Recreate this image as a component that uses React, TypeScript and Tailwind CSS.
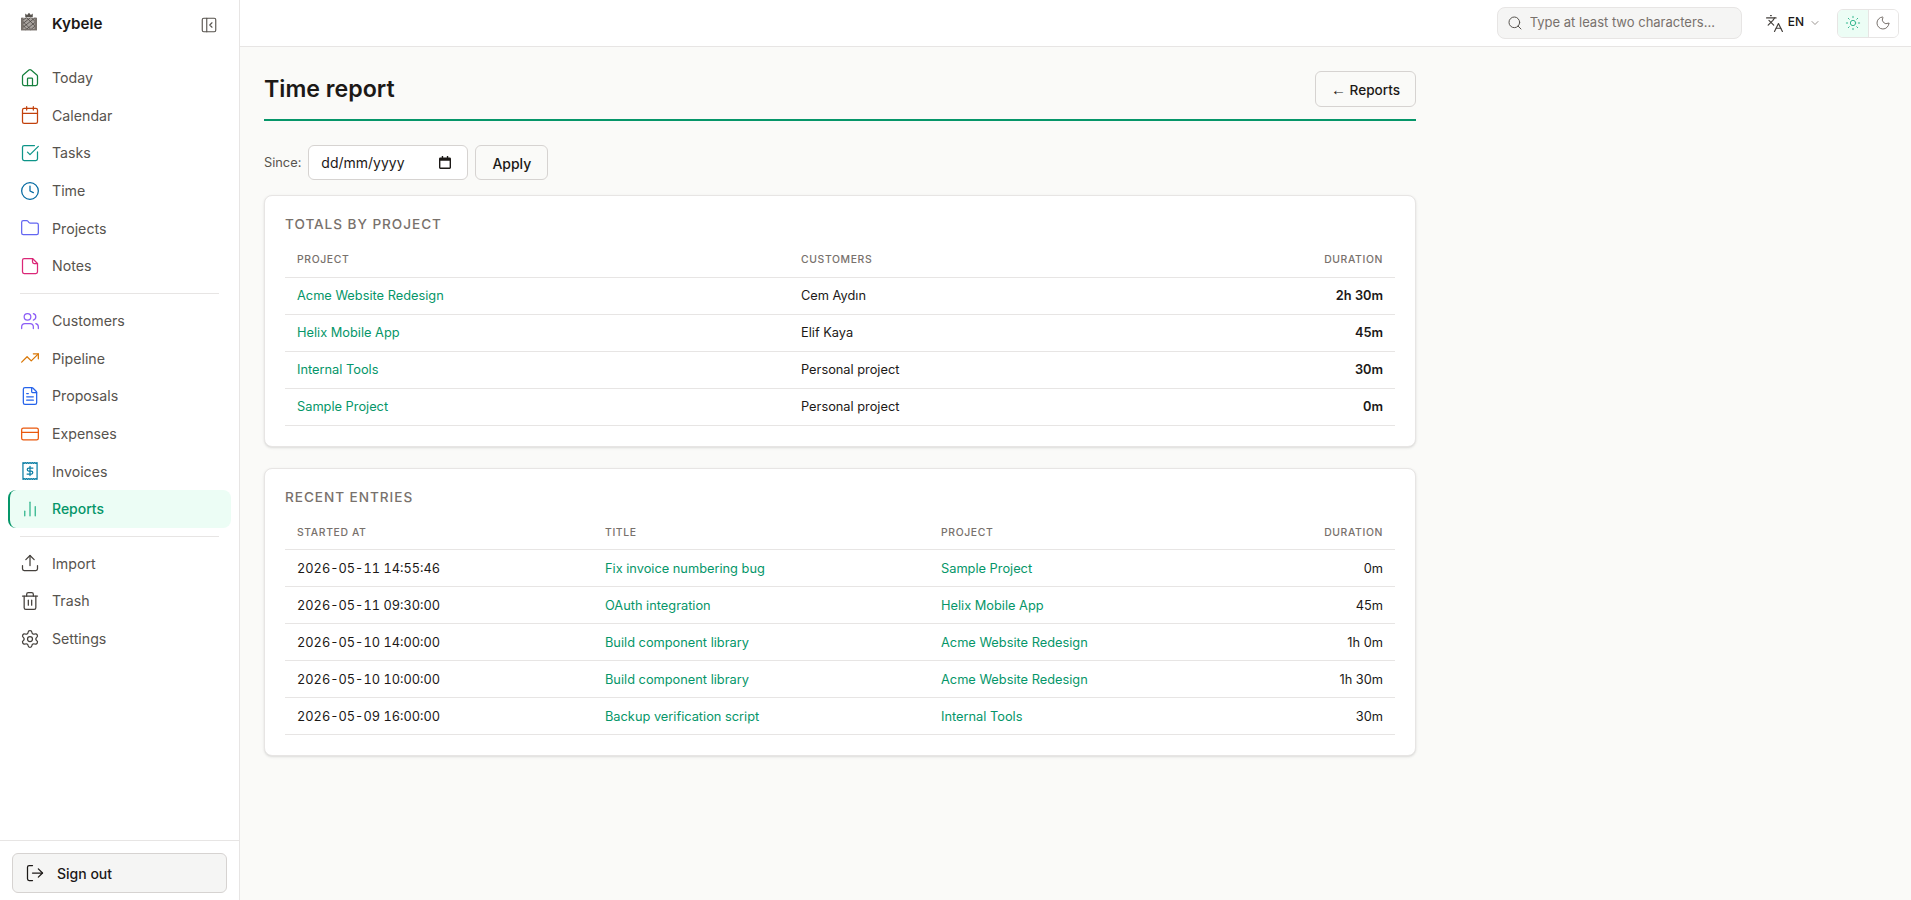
import React from "react";
import {
  House, Calendar, SquareCheckBig, Clock, Folder, Users, TrendingUp, FileText, CreditCard,
  ChartNoAxesColumn, Upload, Trash2, Settings, LogOut, Languages, Sun, Moon, Search, ChevronDown, PanelLeftClose,
} from "lucide-react";

const NoteIcon = ({ size = 20, className = "" }: { size?: number; className?: string }) => (
  <svg width={size} height={size} viewBox="0 0 24 24" fill="none" stroke="currentColor" strokeWidth={1.5} strokeLinecap="round" strokeLinejoin="round" className={className}>
    <path d="M5 3h10l6 6v10a2 2 0 0 1-2 2H5a2 2 0 0 1-2-2V5a2 2 0 0 1 2-2z" />
    <path d="M15 3v4a2 2 0 0 0 2 2h4" />
  </svg>
);

const InvoiceIcon = ({ size = 20, className = "" }: { size?: number; className?: string }) => (
  <svg width={size} height={size} viewBox="0 0 24 24" fill="none" stroke="currentColor" strokeWidth={1.5} strokeLinecap="round" strokeLinejoin="round" className={className}>
    <path d="M3.5 2l1.4.8 1.4-.8 1.4.8 1.4-.8 1.4.8L12 2l1.4.8 1.4-.8 1.4.8 1.4-.8 1.4.8 1.5-.8v20l-1.5-.8-1.4.8-1.4-.8-1.4.8-1.4-.8-1.4.8-1.4-.8-1.4.8-1.4-.8-1.4.8-1.4-.8-1.4.8z" />
    <path d="M15.5 8.5h-5a1.8 1.8 0 0 0 0 3.6h3a1.8 1.8 0 0 1 0 3.6h-5" />
    <path d="M12 6.5v11" />
  </svg>
);

const Logo = () => (
  <svg width="16" height="19" viewBox="0 0 17 20" fill="none" className="shrink-0 mb-[6px]">
    <path d="M4.5 5.5V1.5l2 1.5 2-2.2 2 2.2 2-1.5v4z" fill="#57534e" />
    <rect x="1" y="6" width="15" height="13" fill="#a8a29e" />
    <path d="M1 9l5-3M1 13l9-7M1 17l14-11M5 19l11-9M10 19l6-5M1 9l10 10M1 13l6 6M6 6l10 10M11 6l5 5" stroke="#44403c" strokeWidth="0.8" />
    <rect x="0" y="6" width="2.5" height="13" fill="#78716c" />
    <rect x="14.5" y="6" width="2.5" height="13" fill="#78716c" />
    <rect x="0" y="18" width="17" height="1.5" fill="#78716c" />
  </svg>
);

type NavItem = { label: string; icon: React.ComponentType<any>; color: string; active?: boolean };

const group1: NavItem[] = [
  { label: "Today", icon: House, color: "text-[#15803d]" },
  { label: "Calendar", icon: Calendar, color: "text-[#c2410c]" },
  { label: "Tasks", icon: SquareCheckBig, color: "text-[#0d9488]" },
  { label: "Time", icon: Clock, color: "text-[#0369a1]" },
  { label: "Projects", icon: Folder, color: "text-[#6366f1]" },
  { label: "Notes", icon: NoteIcon, color: "text-[#db2777]" },
];
const group2: NavItem[] = [
  { label: "Customers", icon: Users, color: "text-[#8b5cf6]" },
  { label: "Pipeline", icon: TrendingUp, color: "text-[#d97706]" },
  { label: "Proposals", icon: FileText, color: "text-[#2563eb]" },
  { label: "Expenses", icon: CreditCard, color: "text-[#ea580c]" },
  { label: "Invoices", icon: InvoiceIcon, color: "text-[#0e7fa5]" },
  { label: "Reports", icon: ChartNoAxesColumn, color: "text-[#34b78f]", active: true },
];
const group3: NavItem[] = [
  { label: "Import", icon: Upload, color: "text-[#44403c]" },
  { label: "Trash", icon: Trash2, color: "text-[#44403c]" },
  { label: "Settings", icon: Settings, color: "text-[#44403c]" },
];

function NavRow({ item }: { item: NavItem }) {
  const Icon = item.icon;
  return (
    <a
      className={
        item.active
          ? "flex items-center gap-3 h-[37.6px] pl-[10px] pr-3 rounded-[8px] border-l-2 border-[#059669] bg-[#ecfdf5] text-[#059669] font-medium text-[14px]"
          : "flex items-center gap-3 h-[37.6px] pl-[10px] pr-3 rounded-[8px] border-l-2 border-transparent text-[#57534e] font-normal text-[14.2px]"
      }
    >
      {item.active ? (
        <Icon size={18} strokeWidth={1.75} className={item.color + " shrink-0 mx-[1px]"} />
      ) : (
        <Icon size={20} strokeWidth={1.5} className={item.color + " shrink-0"} />
      )}
      <span>{item.label}</span>
    </a>
  );
}

const Th = ({ children, right, w }: { children: React.ReactNode; right?: boolean; w?: string }) => (
  <th
    style={w ? { width: w } : undefined}
    className={
      (right ? "text-right " : "text-left ") +
      "px-3 pt-[2px] h-[35px] text-[10.4px] font-medium uppercase tracking-[0.06em] text-[#78716c] border-b border-[#e7e5e4]"
    }
  >
    {children}
  </th>
);

const Link = ({ children }: { children: React.ReactNode }) => <span className="text-[#059669]">{children}</span>;
const Td = ({ children, right, bold, mono }: { children: React.ReactNode; right?: boolean; bold?: boolean; mono?: boolean }) => (
  <td
    className={
      (right ? "text-right " : "text-left ") +
      (bold ? "font-semibold " : "") +
      (mono ? "tabular-nums " : "") +
      "px-3 pt-[1px] h-[37px] text-[12.8px] text-[#1c1917] border-b border-[#e7e5e4]"
    }
  >
    {children}
  </td>
);

const Card = ({ title, children }: { title: string; children: React.ReactNode }) => (
  <section className="bg-white border border-[#e7e5e4] rounded-[8px] shadow-sm p-5 mb-[21px]">
    <h2 className="text-[13.6px] font-medium uppercase tracking-[0.07em] text-[#78716c] leading-[16px] mb-[10px]">{title}</h2>
    {children}
  </section>
);

const totals = [
  ["Acme Website Redesign", "Cem Aydın", "2h 30m"],
  ["Helix Mobile App", "Elif Kaya", "45m"],
  ["Internal Tools", "Personal project", "30m"],
  ["Sample Project", "Personal project", "0m"],
];
const recent = [
  ["2026-05-11 14:55:46", "Fix invoice numbering bug", "Sample Project", "0m"],
  ["2026-05-11 09:30:00", "OAuth integration", "Helix Mobile App", "45m"],
  ["2026-05-10 14:00:00", "Build component library", "Acme Website Redesign", "1h 0m"],
  ["2026-05-10 10:00:00", "Build component library", "Acme Website Redesign", "1h 30m"],
  ["2026-05-09 16:00:00", "Backup verification script", "Internal Tools", "30m"],
];

export default function App() {
  return (
    <div className="flex h-screen w-full overflow-hidden bg-[#fafaf8] text-[#1c1917] font-['Inter',sans-serif]">
      <aside className="w-[240px] shrink-0 bg-white border-r border-[#e7e5e4] flex flex-col">
        <div className="flex items-center h-[47px] pt-[2px] pl-[21px] pr-[21px] mb-[12px]">
          <Logo />
          <span className="ml-[15px] text-[15.2px] font-semibold text-[#1c1917]">Kybele</span>
          <PanelLeftClose size={18} strokeWidth={1.5} className="ml-auto text-[#57534e]" />
        </div>
        <nav className="flex-1 px-2">
          {group1.map((i) => <NavRow key={i.label} item={i} />)}
          <div className="h-px bg-[#e7e5e4] mx-3 mt-[8px] mb-[8.5px]" />
          {group2.map((i) => <NavRow key={i.label} item={i} />)}
          <div className="h-px bg-[#e7e5e4] mx-3 my-[8px]" />
          {group3.map((i) => <NavRow key={i.label} item={i} />)}
        </nav>
        <div className="border-t border-[#e7e5e4] px-3 pt-3 pb-[7px]">
          <button className="flex items-center gap-3 w-full h-[40px] px-[12px] rounded-[6px] border border-[#d6d3d1] bg-[#f5f5f4] text-[14px] font-medium text-[#1c1917]">
            <LogOut size={20} strokeWidth={1.5} className="text-[#1c1917]" />
            <span>Sign out</span>
          </button>
        </div>
      </aside>
      <div className="flex-1 flex flex-col min-w-0">
        <header className="h-[47px] shrink-0 bg-white border-b border-[#e7e5e4] flex items-center justify-end pr-3">
          <div className="flex items-center h-[32px] w-[245px] rounded-[8px] border border-[#e7e5e4] bg-[#f5f5f4] pl-[9px] pr-[10px] gap-[7px]">
            <Search size={16} strokeWidth={1.5} className="text-[#57534e] shrink-0" />
            <input
              placeholder="Type at least two characters..."
              className="bg-transparent outline-none w-full text-[13px] placeholder:text-[#78716c]"
            />
          </div>
          <div className="flex items-center ml-[23px] mr-[16px]">
            <Languages size={19} strokeWidth={1.5} className="text-[#44403c]" />
            <span className="ml-[4px] mb-[2px] text-[12px] font-medium text-[#1c1917]">EN</span>
            <ChevronDown size={12} strokeWidth={1.5} className="ml-[5px] text-[#78716c]" />
          </div>
          <div className="flex h-[29px] w-[62px] rounded-[6px] border border-[#e7e5e4] overflow-hidden">
            <div className="flex-1 flex items-center justify-center bg-[#ecfdf5] border-r border-[#e7e5e4]">
              <Sun size={16} strokeWidth={1.5} className="text-[#34b78f]" />
            </div>
            <div className="flex-1 flex items-center justify-center bg-white">
              <Moon size={16} strokeWidth={1.5} className="text-[#78716c]" />
            </div>
          </div>
        </header>
        <main className="flex-1 overflow-hidden px-6 pt-6">
          <div className="w-[1152px]">
            <div className="flex items-center justify-between pb-3 border-b-2 border-[#059669] mb-6">
              <h1 className="text-[23.2px] font-semibold text-[#1c1917] leading-[36px]">Time report</h1>
              <button className="h-[36px] w-[101px] pt-[3px] rounded-[6px] border border-[#d6d3d1] bg-[#fafaf8] text-[13.6px] font-medium text-[#1c1917]">
                <span className="text-[15px] font-['Liberation_Sans',sans-serif]">←</span> Reports
              </button>
            </div>
            <div className="flex items-center mb-[15px]">
              <span className="text-[12.8px] text-[#57534e] mr-[7px]">Since:</span>
              <div className="flex items-center justify-between h-[35px] w-[160px] pl-3 pr-[16px] rounded-[6px] border border-[#d6d3d1] bg-white text-[14px] text-[#1c1917]">
                <span>dd/mm/yyyy</span>
                <svg width="12" height="13" viewBox="0 0 13 14" className="text-[#1c1917]" fill="currentColor">
                  <path d="M3 0h1.5v1.5h4V0H10v1.5h1.5A1.5 1.5 0 0 1 13 3v9.5a1.5 1.5 0 0 1-1.5 1.5h-10A1.5 1.5 0 0 1 0 12.5V3a1.5 1.5 0 0 1 1.5-1.5H3zM1.5 5v7.5h10V5z" />
                </svg>
              </div>
              <button className="ml-[7px] h-[35px] w-[73px] pt-[1px] rounded-[6px] border border-[#d6d3d1] bg-[#fafaf8] text-[14px] font-medium text-[#1c1917]">Apply</button>
            </div>
            <Card title="Totals by project">
              <table className="w-full border-collapse">
                <thead>
                  <tr><Th w="504px">Project</Th><Th w="400px">Customers</Th><Th right>Duration</Th></tr>
                </thead>
                <tbody>
                  {totals.map((r) => (
                    <tr key={r[0]}>
                      <Td><Link>{r[0]}</Link></Td>
                      <Td>{r[1]}</Td>
                      <Td right bold>{r[2]}</Td>
                    </tr>
                  ))}
                </tbody>
              </table>
            </Card>
            <Card title="Recent entries">
              <table className="w-full border-collapse">
                <thead>
                  <tr><Th w="308px">Started at</Th><Th w="336px">Title</Th><Th w="320px">Project</Th><Th right>Duration</Th></tr>
                </thead>
                <tbody>
                  {recent.map((r) => (
                    <tr key={r[0]}>
                      <Td mono>{r[0]}</Td>
                      <Td><Link>{r[1]}</Link></Td>
                      <Td><Link>{r[2]}</Link></Td>
                      <Td right>{r[3]}</Td>
                    </tr>
                  ))}
                </tbody>
              </table>
            </Card>
          </div>
        </main>
      </div>
    </div>
  );
}
